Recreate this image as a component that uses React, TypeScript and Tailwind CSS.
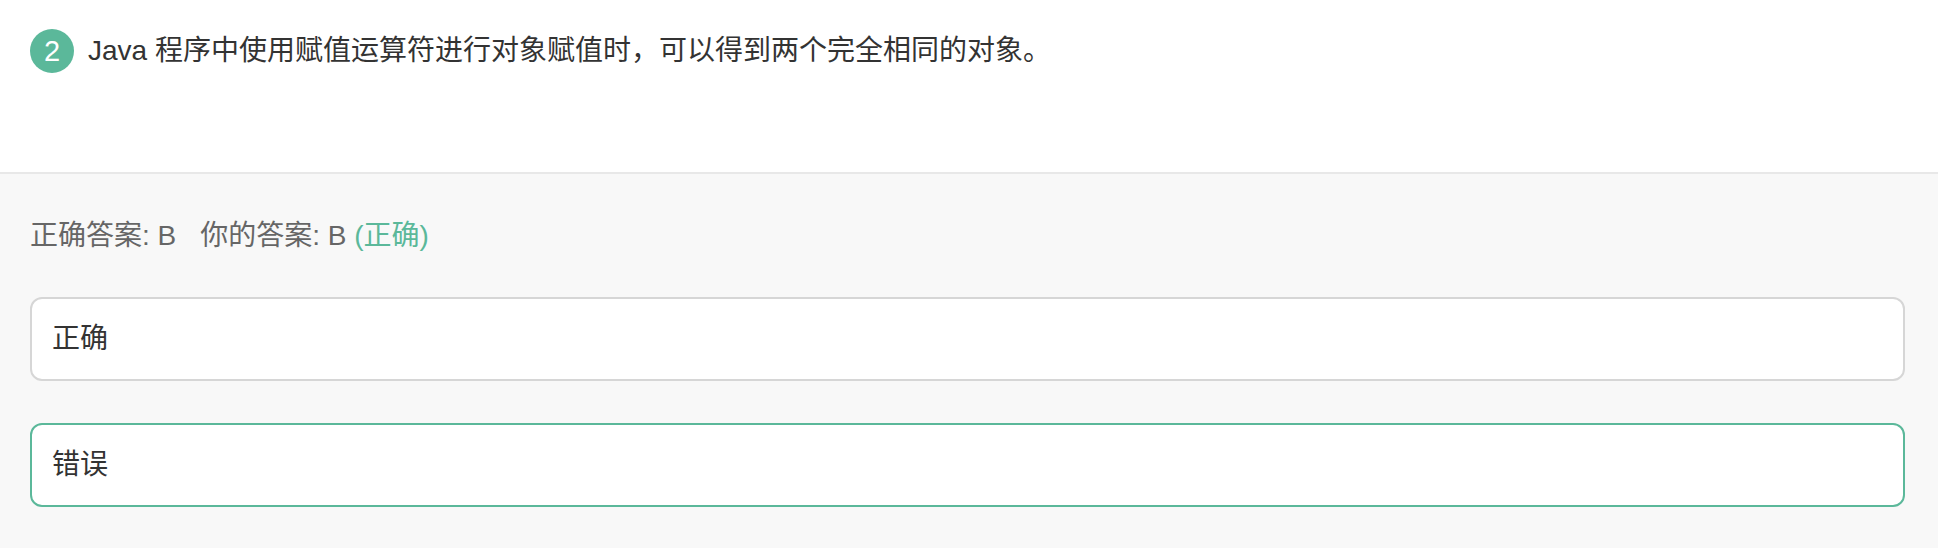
import React from 'react';

const font = { fontFamily: '"Liberation Sans", "Noto Sans CJK SC", sans-serif' };

function Option({ label, picked }: { label: string; picked?: boolean }) {
  return (
    <div
      className={
        'flex h-[84px] items-center rounded-[12px] border-2 bg-white px-[20px] text-[28px] text-[#333] ' +
        (picked ? 'border-[#5bb89a]' : 'border-[#d6d6d6]')
      }
    >
      {label}
    </div>
  );
}

export default function App() {
  return (
    <div className="w-[1938px] h-[548px] overflow-hidden bg-white" style={font}>
      <div className="h-[172px] px-[30px] pt-[29px]">
        <div className="flex items-center gap-[14px]">
          <span className="flex h-[44px] w-[44px] shrink-0 items-center justify-center rounded-full bg-[#5bb89a] text-[29px] leading-none text-white">
            2
          </span>
          <p className="text-[28px] leading-[44px] text-[#333]">
            Java 程序中使用赋值运算符进行对象赋值时，可以得到两个完全相同的对象。
          </p>
        </div>
      </div>
      <div className="border-t-2 border-[#e8e8e8] bg-[#f8f8f8] px-[30px] pt-[42px] pb-[41px]">
        <div className="text-[28px] leading-[40px] text-[#666]">
          <span>正确答案: B</span>
          <span className="ml-[24px]">你的答案: B</span>
          <span className="text-[#5bb89a]"> (正确)</span>
        </div>
        <div className="mt-[41px] flex flex-col gap-[42px] pr-[3px]">
          <Option label="正确" />
          <Option label="错误" picked />
        </div>
      </div>
    </div>
  );
}
